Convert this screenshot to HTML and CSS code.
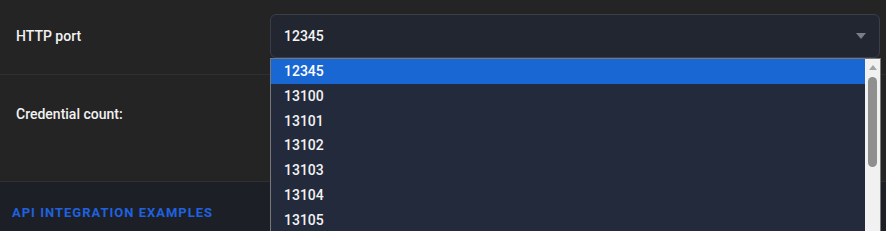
FILE: index.html
```html
<!DOCTYPE html>
<html lang="en">
  <head>
    <meta charset="UTF-8" />
    <meta name="viewport" content="width=device-width, initial-scale=1.0" />
    <title>Settings</title>
    <link rel="stylesheet" href="styles.css">
  </head>
  <body>
    <main class="panel">
      <div class="row first">
        <label class="label">HTTP port</label>
        <div class="select">
          <span class="value">12345</span>
          <span class="arrow"></span>
        </div>
      </div>
      <div class="row second">
        <label class="label">Credential count:</label>
      </div>
      <div class="section">
        <h2>API INTEGRATION EXAMPLES</h2>
      </div>

      <div class="dropdown">
        <ul class="options">
          <li class="selected">12345</li>
          <li>13100</li>
          <li>13101</li>
          <li>13102</li>
          <li>13103</li>
          <li>13104</li>
          <li>13105</li>
        </ul>
        <div class="scrollbar">
          <span class="up"></span>
          <span class="thumb"></span>
        </div>
      </div>
    </main>
  </body>
</html>
```

FILE: styles.css
```css
* {
  margin: 0;
  padding: 0;
  box-sizing: border-box;
  font-family: Roboto, "Liberation Sans", Arial, sans-serif;
}
body {
  background: #242424;
  color: #f2f2f2;
  overflow: hidden;
}
.panel {
  position: relative;
  width: 886px;
  height: 231px;
  overflow: hidden;
}
.row {
  display: flex;
  border-bottom: 1px solid #2f2f2f;
}
.row.first {
  height: 75px;
  align-items: center;
  padding-bottom: 3px;
}
.row.second {
  height: 107px;
  padding-top: 31px;
}
.label {
  width: 270px;
  padding-left: 16px;
  font-size: 14px;
  font-weight: 500;
  line-height: 16px;
}
.select {
  width: 610px;
  height: 44px;
  background: #222631;
  border: 1px solid #3a3e4a;
  border-radius: 6px;
  display: flex;
  align-items: center;
  justify-content: space-between;
  padding: 0 13px 0 13px;
}
.value {
  font-size: 14px;
  font-weight: 500;
  color: #f4f4f4;
}
.arrow {
  width: 0;
  height: 0;
  border-left: 5px solid transparent;
  border-right: 5px solid transparent;
  border-top: 6px solid #7a7d86;
  margin-top: 1px;
}
.section {
  background: #1d1f27;
  height: 60px;
  padding: 23px 12px;
}
.section h2 {
  font-size: 13px;
  font-weight: 700;
  letter-spacing: 1px;
  color: #1f62df;
  line-height: 16px;
}
.dropdown {
  position: absolute;
  top: 58px;
  left: 270px;
  width: 611px;
  height: 175px;
  border: 1px solid #787878;
  background: #232a3c;
  display: flex;
}
.options {
  flex: 1;
  list-style: none;
}
.options li {
  height: 24.83px;
  line-height: 24.83px;
  padding-left: 13px;
  font-size: 14px;
  font-weight: 500;
  color: #f2f2f2;
}
.options li.selected {
  background: #1967d3;
  color: #ffffff;
}
.scrollbar {
  width: 15px;
  background: #f1f1f1;
  display: flex;
  flex-direction: column;
  align-items: center;
}
.up {
  margin-top: 6px;
  width: 0;
  height: 0;
  border-left: 4.5px solid transparent;
  border-right: 4.5px solid transparent;
  border-bottom: 5px solid #a3a3a3;
}
.thumb {
  margin-top: 7px;
  width: 9px;
  height: 90px;
  border-radius: 4.5px;
  background: #8f8f8f;
}
```
